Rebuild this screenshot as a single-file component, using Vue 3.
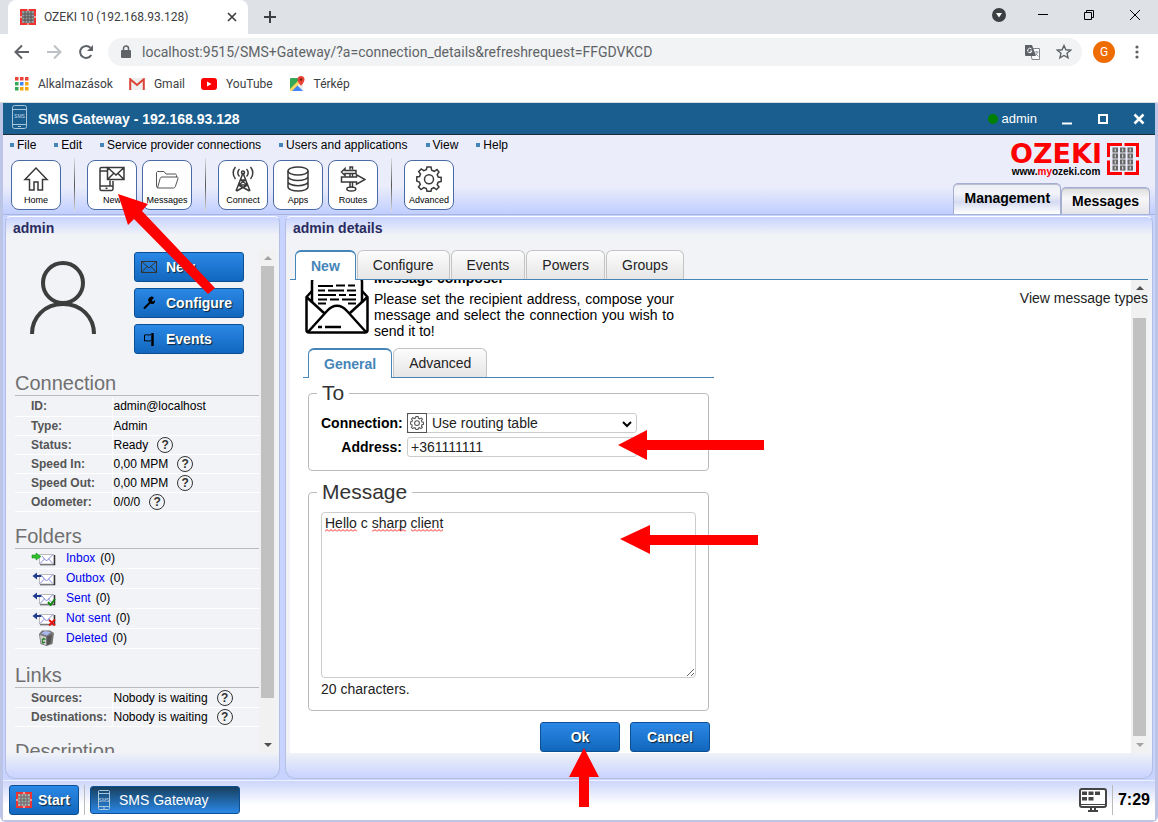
<script setup>
import { ref, computed } from 'vue'

const menu = ['File', 'Edit', 'Service provider connections', 'Users and applications', 'View', 'Help']

// toolbar groups, a separator is drawn between them
const toolbar = [
  ['Home'],
  ['New', 'Messages'],
  ['Connect', 'Apps', 'Routes'],
  ['Advanced']
]

const connection = [
  { name: 'ID:', value: 'admin@localhost' },
  { name: 'Type:', value: 'Admin' },
  { name: 'Status:', value: 'Ready', help: true },
  { name: 'Speed In:', value: '0,00 MPM', help: true },
  { name: 'Speed Out:', value: '0,00 MPM', help: true },
  { name: 'Odometer:', value: '0/0/0', help: true }
]

const folders = [
  { name: 'Inbox', count: 0 },
  { name: 'Outbox', count: 0 },
  { name: 'Sent', count: 0 },
  { name: 'Not sent', count: 0 },
  { name: 'Deleted', count: 0 }
]

const links = [
  { name: 'Sources:', value: 'Nobody is waiting', help: true },
  { name: 'Destinations:', value: 'Nobody is waiting', help: true }
]

const tabs = ['New', 'Configure', 'Events', 'Powers', 'Groups']
const activeTab = ref('New')
const formTabs = ['General', 'Advanced']
const activeFormTab = ref('General')

const url = ref('localhost:9515/SMS+Gateway/?a=connection_details&refreshrequest=FFGDVKCD')
const route = ref('Use routing table')
const address = ref('+361111111')
const message = ref('Hello c sharp client')
const count = computed(() => message.value.length)
</script>

<template>
  <div class="browser">
    <!-- browser chrome -->
    <div class="tabstrip">
      <div class="browser-tab">
        <svg class="favicon" width="16" height="16" viewBox="0 0 16 16">
          <rect width="16" height="16" fill="#e33" />
          <rect x="2" y="2" width="12" height="12" fill="#999" />
          <path d="M5 2v12M8 2v12M11 2v12M2 5h12M2 8h12M2 11h12" stroke="#555" />
          <path d="M8 0v2M8 14v2M0 8h2M14 8h2" stroke="#fff" />
        </svg>
        <span class="browser-tab-title">OZEKI 10 (192.168.93.128)</span>
        <button class="plain" aria-label="Close tab">
          <svg width="10" height="10" viewBox="0 0 10 10"><path d="M1 1l8 8M9 1l-8 8" stroke="#3c4043" stroke-width="1.7" /></svg>
        </button>
      </div>
      <button class="plain new-tab" aria-label="New tab">
        <svg width="12" height="12" viewBox="0 0 12 12"><path d="M6 0v12M0 6h12" stroke="#3c4043" stroke-width="2" /></svg>
      </button>
      <div class="window-buttons">
        <svg width="14" height="14" viewBox="0 0 14 14"><circle cx="7" cy="7" r="7" fill="#3c4043" /><path d="M4 5h6l-3 4.500z" fill="#fff" /></svg>
        <button class="plain" aria-label="Minimize"><svg width="10" height="10" viewBox="0 0 10 10"><path d="M0 4.500h10" stroke="#000" /></svg></button>
        <button class="plain" aria-label="Restore"><svg width="10" height="10" viewBox="0 0 10 10"><path d="M.5 2.500h7v7h-7zM2.500 2.500v-2h7v7h-2" fill="none" stroke="#000" /></svg></button>
        <button class="plain" aria-label="Close"><svg width="10" height="10" viewBox="0 0 10 10"><path d="M0 0l10 10M10 0L0 10" stroke="#000" /></svg></button>
      </div>
    </div>

    <div class="navbar">
      <button class="plain" aria-label="Back"><svg width="16" height="16" viewBox="0 0 16 16"><path d="M15 8H2M8 1.500L1.500 8 8 14.500" fill="none" stroke="#5f6368" stroke-width="2" /></svg></button>
      <button class="plain" aria-label="Forward"><svg width="16" height="16" viewBox="0 0 16 16"><path d="M1 8h13M8 1.500L14.500 8 8 14.500" fill="none" stroke="#bdc1c6" stroke-width="2" /></svg></button>
      <button class="plain" aria-label="Reload"><svg width="16" height="16" viewBox="0 0 16 16"><path d="M13.300 11A6 6 0 1 1 12.500 3.800" fill="none" stroke="#5f6368" stroke-width="2" /><path d="M15 1v6H9z" fill="#5f6368" /></svg></button>
      <div class="omnibox">
        <svg width="10" height="14" viewBox="0 0 10 14"><rect y="5" width="10" height="8" rx="1" fill="#5f6368" /><path d="M2.500 5V3.500a2.500 2.500 0 0 1 5 0V5" fill="none" stroke="#5f6368" stroke-width="1.500" /></svg>
        <input v-model="url" class="url" aria-label="Address and search bar">
        <svg width="15" height="15" viewBox="0 0 15 15">
          <path d="M5 3.500h9.500v11H7z" fill="#fff" stroke="#80868b" />
          <path d="M0 0h7l4 11H1a1 1 0 0 1-1-1z" fill="#5f6368" />
          <path d="M6.500 4A2.200 2.200 0 1 0 7 6H5" fill="none" stroke="#fff" />
          <path d="M9.500 7h4M11.500 6v1M13 7l-3 4M10.500 8.500l3 3" fill="none" stroke="#80868b" stroke-width=".8" />
        </svg>
        <svg width="16" height="16" viewBox="0 0 16 16"><path d="M8 1.500l1.900 4.300 4.700.4-3.600 3.100 1.100 4.600L8 11.500l-4.100 2.400L5 9.300 1.400 6.200l4.700-.4z" fill="none" stroke="#5f6368" stroke-width="1.400" /></svg>
      </div>
      <div class="avatar">G</div>
      <button class="plain more" aria-label="Menu"><svg width="4" height="14" viewBox="0 0 4 14" fill="#5f6368"><circle cx="2" cy="2" r="1.600" /><circle cx="2" cy="7" r="1.600" /><circle cx="2" cy="12" r="1.600" /></svg></button>
    </div>

    <div class="bookmarks">
      <a href="#">
        <svg width="14" height="14" viewBox="0 0 14 14">
          <path d="M0 0h3.500v3.500H0zM5 0h3.500v3.500H5zM10 0h3.500v3.500H10z" fill="#ea4335" />
          <path d="M0 5h3.500v3.500H0zM0 10h3.500v3.500H0z" fill="#34a853" />
          <path d="M5 5h3.500v3.500H5z" fill="#4285f4" />
          <path d="M10 5h3.500v3.500H10zM5 10h3.500v3.500H5zM10 10h3.500v3.500H10z" fill="#f4a70a" />
        </svg>Alkalmazások</a>
      <a href="#">
        <svg width="16" height="12" viewBox="0 0 16 12"><path d="M1 0h14v12H1z" fill="#eee" /><path d="M1.200 12V1.200L8 7l6.800-5.800V12" fill="none" stroke="#db4437" stroke-width="2" /></svg>Gmail</a>
      <a href="#">
        <svg width="16" height="12" viewBox="0 0 16 12"><rect width="16" height="12" rx="3" fill="#f00" /><path d="M6 3.500v5L10.500 6z" fill="#fff" /></svg>YouTube</a>
      <a href="#">
        <svg width="16" height="16" viewBox="0 0 16 16">
          <rect x="1" y="2" width="13" height="13" rx="1" fill="#34a853" />
          <path d="M1 14L13 3l1 1v11z" fill="#eee" />
          <path d="M2 15l6-6 6 6z" fill="#4285f4" />
          <path d="M1 13L12 2h2v2L3 15H1z" fill="#fdd663" />
          <path d="M12 0a3.500 3.500 0 0 1 3.500 3.500C15.500 6 12 10 12 10S8.500 6 8.500 3.500A3.500 3.500 0 0 1 12 0z" fill="#ea4335" />
          <circle cx="12" cy="3.500" r="1.200" fill="#801e16" />
        </svg>Térkép</a>
    </div>

    <!-- SMS gateway window -->
    <div class="desktop">
      <div class="titlebar">
        <svg width="16" height="24" viewBox="0 0 16 24">
          <rect x=".5" y=".5" width="14" height="23" rx="2" fill="none" stroke="#a9c6da" />
          <path d="M1 4.500h13M1 19.500h13M6 21.500h3" stroke="#a9c6da" />
          <text x="7.500" y="13" class="phone-text">SMS</text>
        </svg>
        <h1>SMS Gateway - 192.168.93.128</h1>
        <span class="dot"></span>
        <span class="user">admin</span>
        <button class="plain" aria-label="Minimize window"><svg width="12" height="12" viewBox="0 0 12 12"><path d="M1 10.500h10" stroke="#fff" stroke-width="2" /></svg></button>
        <button class="plain" aria-label="Maximize window"><svg width="12" height="12" viewBox="0 0 12 12"><path d="M2 2h8v8H2z" fill="none" stroke="#fff" stroke-width="2" /></svg></button>
        <button class="plain" aria-label="Close window"><svg width="12" height="12" viewBox="0 0 12 12"><path d="M1.500 1.500l9 9M10.500 1.500l-9 9" stroke="#fff" stroke-width="2.500" /></svg></button>
      </div>

      <header class="header">
        <div class="header-left">
          <nav class="menu">
            <a v-for="item in menu" :key="item" href="#">{{ item }}</a>
          </nav>
          <div class="toolbar">
            <div v-for="(group, i) in toolbar" :key="i" class="tool-group">
              <button v-for="tool in group" :key="tool" class="tool">
                <svg width="26" height="26" viewBox="0 0 26 26" fill="none" stroke="#3a3a3a" stroke-width="1.500">
                  <path v-if="tool === 'Home'" d="M13 2L2 13.500h4.500V24h4.500v-8h4v8h4.500V13.500H24z" />
                  <g v-else-if="tool === 'New'">
                    <path d="M9 1.500H2.500a1.500 1.500 0 0 0-1.500 1.500v20a1.500 1.500 0 0 0 1.500 1.500h10a1.500 1.500 0 0 0 1.500-1.500v-8M1 20h13M1 5h7M6.500 22.300h2M11 14.500v5" />
                    <path d="M8.500 1.500H25v12H8.500zM8.500 1.500L17 9l8-7.500M8.500 13.500l6-6M25 13.500l-6-6" />
                  </g>
                  <g v-else-if="tool === 'Messages'" stroke-width="1" stroke="#555">
                    <path d="M3.500 22L2.500 20V7c0-1 .5-1.500 1.500-1.500h6l2 2.500h9c1 0 1.500.5 1.500 1.500V11M3.500 22h16c1 0 1.500-.5 1.800-1.300L24 12.500c.3-1-.2-1.500-1-1.500H8c-1 0-1.500.5-1.800 1.300z" />
                  </g>
                  <g v-else-if="tool === 'Connect'">
                    <path d="M13 7L6 25M13 7l7 18M10.500 14h5M8.500 19h9M10.500 14l7 5M15.500 14l-7 5M8.500 19l11 6M17.500 19l-11 6" />
                    <circle cx="13" cy="6.500" r="1.500" />
                    <path d="M9.500 3a5 5 0 0 0 0 7.500M16.500 3a5 5 0 0 1 0 7.500M5.500 1a9 9 0 0 0 0 12M20.500 1a9 9 0 0 1 0 12" />
                  </g>
                  <g v-else-if="tool === 'Apps'">
                    <ellipse cx="13" cy="5" rx="10" ry="4" />
                    <path d="M3 5v16c0 2.200 4.500 4 10 4s10-1.800 10-4V5M3 10.500c0 2.200 4.500 4 10 4s10-1.800 10-4M3 15.700c0 2.200 4.500 4 10 4s10-1.800 10-4" />
                  </g>
                  <g v-else-if="tool === 'Routes'">
                    <path d="M10 3.500V1h2.500v2.500M16 4.500H5V2.500L1.500 6 5 9.500v-2h11zM1.500 11h15V8.800L25 13.500l-8.500 4.700V16h-15zM10 7.500V11M12.500 7.500V11M10 16v6M12.500 16v6" />
                    <ellipse cx="11.300" cy="23" rx="4.500" ry="2" />
                  </g>
                  <g v-else>
                    <path d="M11 1h4l.7 3.300 2.500 1L21 3.500 23 6l-1.800 2.500 1 2.500 3 .5v4l-3 .7-1 2.500L23 21l-2.500 2.500-2.700-1.800-2.300 1L15 25.300h-4l-.7-2.700-2.500-1L5 23.500 2.500 21l1.800-2.500-1-2.500L.7 15v-4l2.800-.5 1-2.500L2.700 5.500 5.200 3l2.500 1.700 2.600-1z" />
                    <circle cx="13" cy="13.200" r="4.500" />
                  </g>
                </svg>
                <span>{{ tool }}</span>
              </button>
            </div>
          </div>
        </div>
        <div class="header-right">
          <div class="logo">
            <div>
              <div class="logo-name">OZEKI</div>
              <div class="logo-url">www.<span>my</span>ozeki.com</div>
            </div>
            <svg width="32" height="32" viewBox="0 0 32 32">
              <path d="M1.500 14V1.500H15M17.500 1.500h13V14M30.500 17.500v13h-13M15 30.500H1.500v-13" fill="none" stroke="#f00" stroke-width="3" />
              <path v-for="y in [4, 10, 16, 22]" :key="y" :d="`M5.500 ${y + 3}h5.500M13 ${y + 3}h5.500M20.500 ${y + 3}h5.500`" stroke="#666" stroke-width="5" />
              <path v-for="y in [4, 10, 16, 22]" :key="-y" :d="`M7.700 ${y + 3}h1M15.200 ${y + 3}h1M22.700 ${y + 3}h1`" stroke="#eee" stroke-width="3" />
            </svg>
          </div>
          <div class="view-tabs">
            <button class="active">Management</button>
            <button>Messages</button>
          </div>
        </div>
      </header>

      <main class="panels">
        <section class="panel side">
          <h2>admin</h2>
          <div class="scroll-row">
            <div class="side-content">
              <div class="profile">
                <svg width="66" height="74" viewBox="0 0 66 74" fill="none" stroke="#3d3d3d" stroke-width="4"><circle cx="33" cy="22" r="20" /><path d="M2 73c0-17 13-30 31-30s31 13 31 30" /></svg>
                <div class="profile-buttons">
                  <button class="blue">
                    <svg width="16" height="16" viewBox="0 0 16 16" fill="none" stroke="#333"><path d="M.5 2.500h15v11H.5zM.5 2.500L8 9l7.500-6.500M.5 13.500L6 7.500M15.500 13.500L10 7.500" /></svg>New
                  </button>
                  <button class="blue">
                    <svg width="16" height="16" viewBox="0 0 16 16"><path d="M3 13.500l7-7" stroke="#000" stroke-width="2" /><path d="M13 3l-2 2 .3 1.200h1.400L14 5a3 3 0 0 1-4.500 3.500L8 7a3 3 0 0 1 5-4z" fill="#000" /></svg>Configure
                  </button>
                  <button class="blue">
                    <svg width="16" height="16" viewBox="0 0 16 16"><path d="M11.500 2v13" stroke="#000" stroke-width="2.500" /><path d="M10 3.500c-2 1.500-4-.5-6.500.5v6c2-1 4.500 1 6.500-.5" fill="none" stroke="#000" /></svg>Events
                  </button>
                </div>
              </div>

              <h3>Connection</h3>
              <table class="props">
                <tbody>
                  <tr v-for="row in connection" :key="row.name">
                    <th scope="row">{{ row.name }}</th>
                    <td><div class="cell">{{ row.value }}<button v-if="row.help" class="help">?</button></div></td>
                  </tr>
                </tbody>
              </table>

              <h3>Folders</h3>
              <ul class="folders">
                <li v-for="folder in folders" :key="folder.name">
                  <svg width="26" height="16" viewBox="0 0 26 16">
                    <g v-if="folder.name === 'Deleted'">
                      <path d="M8 4l3-3.500h8L23 3l-1.500 11-6 2-6-2z" fill="#777" />
                      <path d="M9 5l6 2 .5 8.500L10 13z" fill="#ccc" />
                      <path d="M10 3.500l4-2.500 6 1-4 3.500z" fill="#aab6ee" />
                      <path d="M16 6.500l5-2-1.500 9-4 2" fill="#555" />
                      <path d="M11 10.500l1.500-2 2 1M11 11l1 2 2-1" fill="none" stroke="#137a13" stroke-width="1.300" />
                    </g>
                    <g v-else>
                      <path d="M9 14.500h14.500V5" fill="none" stroke="#333" stroke-width="1.500" />
                      <path d="M8.500 4.500h14v9.500h-14z" fill="#fff" stroke="#bbb" />
                      <path d="M9 13.500l4.500-4.500L11 6M22 13.500L17.500 9 22 4.500M13 8.500l2.500 2.500L18 8.500" fill="none" stroke="#8288d8" />
                      <path v-if="folder.name === 'Inbox'" d="M1 5h4V3l5 3.500-5 3.500V8H1z" fill="#2dc02d" stroke="#1b8f1b" stroke-width=".6" />
                      <path v-else d="M10.500 5H6V2.500L1.500 6 6 9.500V7h4.500z" fill="#1d3a8f" />
                      <path v-if="folder.name === 'Sent'" d="M17 12l2.500 3 4.500-6" fill="none" stroke="#128a12" stroke-width="2" />
                      <path v-if="folder.name === 'Not sent'" d="M18 10l6 5.500M24 9.500l-6 6" stroke="#e81414" stroke-width="2" />
                    </g>
                  </svg>
                  <a href="#">{{ folder.name }}</a><span>({{ folder.count }})</span>
                </li>
              </ul>

              <h3>Links</h3>
              <table class="props">
                <tbody>
                  <tr v-for="row in links" :key="row.name">
                    <th scope="row">{{ row.name }}</th>
                    <td><div class="cell">{{ row.value }}<button v-if="row.help" class="help">?</button></div></td>
                  </tr>
                </tbody>
              </table>

              <h3>Description</h3>
            </div>
            <div class="scrollbar">
              <i class="up light"></i>
              <div class="thumb side-thumb"></div>
              <i class="down"></i>
            </div>
          </div>
        </section>

        <section class="panel details">
          <h2>admin details</h2>
          <div class="tabs">
            <button v-for="tab in tabs" :key="tab" :class="{ active: tab === activeTab }" @click="activeTab = tab">{{ tab }}</button>
          </div>
          <div class="scroll-row">
            <div class="details-content">
              <div class="intro">
                <svg width="64" height="64" viewBox="0 0 64 64" fill="none" stroke="#000" stroke-width="2.500" stroke-linejoin="round">
                  <path d="M7 33V12c0-2 1-4 3-4h44c2 0 3 2 3 4v21" />
                  <path d="M7 21L1.500 27v33c0 2 1 2.500 2.500 2.500h56c1.500 0 2.500-.5 2.500-2.500V27L57 21" />
                  <path d="M1.500 27L19 43M62.500 27L45 43M3 62l19-21c6-7 14-7 20 0l19 21" />
                  <path d="M13 16h15M31 15.500h9M43 15.500h7M13 20.500h7M23 20.500h16M42 20.500h9M13 25h18M34 25h7M44 25h7M13 29.500h9M25 29.500h9M37 29.500h14M13 33.500h8M43 33.500h8" stroke-width="2" />
                  <path d="M13 57h4M20 57h16" />
                </svg>
                <div class="intro-text">
                  <strong>Message composer</strong>
                  <p>Please set the recipient address, compose your message and select the connection you wish to send it to!</p>
                </div>
              </div>

              <form class="form" @submit.prevent>
                <div class="tabs form-tabs">
                  <button v-for="tab in formTabs" :key="tab" type="button" :class="{ active: tab === activeFormTab }" @click="activeFormTab = tab">{{ tab }}</button>
                </div>
                <fieldset class="to">
                  <legend>To</legend>
                  <div class="field">
                    <label for="connection">Connection:</label>
                    <div class="select-box">
                      <span class="gear">
                        <svg width="14" height="14" viewBox="0 0 26 26" fill="none" stroke="#555" stroke-width="2">
                          <path d="M11 1h4l.7 3.300 2.500 1L21 3.500 23 6l-1.800 2.500 1 2.500 3 .5v4l-3 .7-1 2.500L23 21l-2.500 2.500-2.700-1.800-2.300 1L15 25.300h-4l-.7-2.700-2.500-1L5 23.500 2.500 21l1.800-2.500-1-2.500L.7 15v-4l2.800-.5 1-2.500L2.700 5.500 5.200 3l2.500 1.700 2.600-1z" />
                          <circle cx="13" cy="13.200" r="4.500" />
                        </svg>
                      </span>
                      <select id="connection" v-model="route">
                        <option>Use routing table</option>
                      </select>
                      <svg class="chevron" width="10" height="8" viewBox="0 0 10 8"><path d="M1 2l4 4 4-4" fill="none" stroke="#000" stroke-width="2" /></svg>
                    </div>
                  </div>
                  <div class="field">
                    <label for="address">Address:</label>
                    <input id="address" v-model="address" type="text">
                  </div>
                </fieldset>
                <fieldset class="message">
                  <legend>Message</legend>
                  <div class="text-wrap">
                    <textarea v-model="message" aria-label="Message" spellcheck="false"></textarea>
                    <!-- spelling marks under Hello, sharp and client -->
                    <svg class="squiggle" width="120" height="3" viewBox="0 0 120 3">
                      <defs>
                        <pattern id="wave" width="4" height="3" patternUnits="userSpaceOnUse"><path d="M0 2.500L2 .5l2 2" fill="none" stroke="#f22" /></pattern>
                      </defs>
                      <path d="M0 0h32v3H0zM47 0h34v3H47zM86 0h32v3H86z" fill="url(#wave)" />
                    </svg>
                  </div>
                  <div class="count">{{ count }} characters.</div>
                </fieldset>
                <div class="actions">
                  <button class="blue">Ok</button>
                  <button class="blue" type="button">Cancel</button>
                </div>
              </form>
            </div>
            <div class="scrollbar">
              <i class="up"></i>
              <div class="thumb details-thumb"></div>
              <i class="down light"></i>
            </div>
            <a href="#" class="types">View message types</a>
          </div>
        </section>
      </main>

      <footer class="taskbar">
        <button class="blue start">
          <svg width="16" height="16" viewBox="0 0 16 16">
            <rect width="16" height="16" fill="#e33" />
            <rect x="2" y="2" width="12" height="12" fill="#aaa" />
            <path d="M5 2v12M8 2v12M11 2v12M2 5h12M2 8h12M2 11h12" stroke="#666" />
            <path d="M8 0v2M8 14v2M0 8h2M14 8h2" stroke="#fff" />
          </svg>Start
        </button>
        <span class="divider"></span>
        <button class="task">
          <svg width="14" height="20" viewBox="0 0 14 20">
            <rect x="1.500" y=".5" width="11" height="19" rx="1" fill="none" stroke="#a9c6da" />
            <path d="M2 3.500h10M2 16.500h10M6 18h2" stroke="#a9c6da" />
            <text x="7" y="12" class="phone-text">SMS</text>
          </svg>SMS Gateway
        </button>
        <svg class="monitor" width="28" height="24" viewBox="0 0 28 24">
          <rect x="1" y="1" width="26" height="18" rx="2" fill="#fff" stroke="#444" stroke-width="2" />
          <path d="M1 16.500h26" stroke="#444" />
          <path d="M3 3.500h5v3.500H3zM9.500 3.500h5v3.500h-5zM16 3.500h5v3.500h-5zM3 9h5v3.500H3zM9.500 9h5v3.500h-5z" fill="#444" />
          <path d="M12 19v3M16 19v3M9 23h10" stroke="#444" stroke-width="2" />
        </svg>
        <span class="divider"></span>
        <span class="clock">7:29</span>
      </footer>
    </div>

    <!-- tutorial arrows laid over the page -->
    <svg class="arrows" width="780" height="822" viewBox="0 0 780 822" fill="#f00">
      <path d="M118 194l30 10-6 7 73 77-7 6-74-75-6 6z" />
      <path d="M618 445l29-15v10h117v10H647v10z" />
      <path d="M620 539l30-14v10h108v10H650v9z" />
      <path d="M584 748l15 29h-10v30h-10v-30h-10z" />
    </svg>
  </div>
</template>

<style>
body {
  margin: 0;
  background: #fff;
}
</style>

<style scoped>
* {
  box-sizing: border-box;
}
.browser {
  position: relative;
  display: flex;
  flex-direction: column;
  height: 100vh;
  min-height: 700px;
  overflow: hidden;
  font-family: "Liberation Sans", Arial, sans-serif;
  font-size: 14px;
  color: #000;
}
button, input, select, textarea {
  font-family: inherit;
  font-size: 14px;
}
a {
  color: inherit;
  text-decoration: none;
}
svg {
  display: block;
  flex: none;
}
.plain {
  padding: 0;
  border: none;
  background: none;
}

/* browser chrome */
.tabstrip {
  display: flex;
  align-items: center;
  height: 34px;
  flex: none;
  background: #dee1e6;
  padding-left: 8px;
}
.browser-tab {
  display: flex;
  align-items: center;
  width: 240px;
  height: 34px;
  padding: 0 11px 0 12px;
  background: #fff;
  border-radius: 8px 8px 0 0;
}
.browser-tab-title {
  flex: 1;
  margin-left: 8px;
  font: 12px Roboto, sans-serif;
  color: #3c4043;
  white-space: nowrap;
}
.new-tab {
  margin-left: 16px;
}
.window-buttons {
  display: flex;
  align-items: center;
  gap: 36px;
  margin-left: auto;
  margin-right: 18px;
  padding-bottom: 4px;
}
.window-buttons > svg {
  margin-right: -4px;
}
.navbar {
  display: flex;
  align-items: center;
  gap: 16px;
  height: 36px;
  flex: none;
  padding: 0 19px 0 14px;
}
.omnibox {
  flex: 1;
  display: flex;
  align-items: center;
  gap: 16px;
  height: 28px;
  margin: 0 -5px 0 -2px;
  padding: 0 10px 0 13px;
  border-radius: 14px;
  background: #f1f3f4;
}
.url {
  flex: 1;
  min-width: 0;
  margin-left: -5px;
  padding: 0;
  border: none;
  background: none;
  font: 14px Roboto, sans-serif;
  color: #5f6368;
}
.avatar {
  width: 22px;
  height: 22px;
  border-radius: 50%;
  background: #ef6c00;
  color: #fff;
  font: 12px/22px Roboto, sans-serif;
  text-align: center;
}
.more {
  margin-left: 4px;
}
.bookmarks {
  display: flex;
  align-items: center;
  gap: 16px;
  height: 33px;
  flex: none;
  padding: 0 15px 4px;
  border-bottom: 1px solid #dadce0;
}
.bookmarks a {
  display: flex;
  align-items: center;
  gap: 9px;
  font: 12px Roboto, sans-serif;
  color: #3c4043;
}

/* gateway window */
.desktop {
  flex: 1;
  display: flex;
  flex-direction: column;
  min-height: 0;
  border: solid #bcc5e6;
  border-width: 0 3px 2px 3px;
  border-radius: 0 0 6px 6px;
  background: #c8d3ff;
}
.titlebar {
  display: flex;
  align-items: center;
  height: 32px;
  flex: none;
  padding: 0 10px 0 9px;
  background: #195e8e;
  border-bottom: 1px solid #1c2b36;
  color: #fff;
}
.titlebar > svg {
  margin-bottom: 3px;
}
.titlebar h1 {
  flex: 1;
  margin: 0 0 0 10px;
  font-size: 14px;
}
.titlebar button {
  margin-left: 24px;
}
.phone-text {
  font-family: "Liberation Sans", sans-serif;
  font-size: 5px;
  fill: #c7dbe8;
  text-anchor: middle;
}
.dot {
  width: 10px;
  height: 10px;
  margin-right: 4px;
  border-radius: 50%;
  background: #008000;
}
.user {
  font-size: 13px;
}
.header {
  display: flex;
  justify-content: space-between;
  flex: none;
  height: 80px;
  background: linear-gradient(#ebedfb 65%, #c0ceff);
  border-bottom: 1px solid #a9b4da;
}
.menu {
  display: flex;
  gap: 18px;
  height: 20px;
  padding-left: 7px;
  line-height: 20px;
  font-size: 12px;
}
.menu a::before {
  content: "";
  display: inline-block;
  width: 4px;
  height: 4px;
  margin-right: 3px;
  vertical-align: 2px;
  background: #4585b8;
}
.toolbar {
  display: flex;
  padding: 5px 8px 0;
}
.tool-group {
  display: flex;
  gap: 5px;
}
.tool-group + .tool-group::before {
  content: "";
  width: 1px;
  height: 54px;
  margin: -2px 7px 0 13px;
  background: linear-gradient(#ddd, #555, #ddd);
}
.tool {
  display: flex;
  flex-direction: column;
  align-items: center;
  justify-content: space-between;
  width: 50px;
  height: 50px;
  padding: 5px 0 3px;
  border: 1px solid #4a6aa5;
  border-radius: 8px;
  background: #fff;
  color: #000;
}
.tool span {
  font-size: 9px;
  line-height: 11px;
}
.header-right {
  display: flex;
  flex-direction: column;
  justify-content: space-between;
  align-items: flex-end;
  padding: 8px 5px 0 0;
}
.logo {
  display: flex;
  gap: 5px;
  margin-right: 11px;
}
.logo-name {
  font: bold 27px/22px "DejaVu Sans", sans-serif;
  color: #f00;
}
.logo-url {
  font-size: 10px;
  line-height: 14px;
  font-weight: bold;
  text-align: center;
}
.logo-url span {
  color: #f00;
}
.view-tabs {
  display: flex;
  align-items: flex-end;
}
.view-tabs button {
  height: 27px;
  padding: 0 10px;
  border: 1px solid #a5aed0;
  border-bottom: none;
  border-radius: 5px 5px 0 0;
  background: linear-gradient(#dcdcdc, #f7f7f9 40%, #e4e4ea);
  font-weight: bold;
  color: #000;
  box-shadow: inset 0 1px #b9bfd0;
}
.view-tabs .active {
  height: 31px;
  padding-bottom: 3px;
  background: linear-gradient(#ececf4, #f4f5fb 30%, #d5dbf2 60%, #fff);
}

/* panels */
.panels {
  flex: 1;
  display: flex;
  gap: 5px;
  min-height: 0;
  padding: 1px 2px 1px;
}
.panel {
  display: flex;
  flex-direction: column;
  min-height: 0;
  min-width: 0;
  padding-bottom: 25px;
  border: 1px solid #b4bfe2;
  border-top-color: #fff;
  border-radius: 6px 6px 10px 10px;
  background: linear-gradient(#c8d3ff, rgba(241, 243, 247, 0) 18px), linear-gradient(to top, #c8d3ff, #f1f3f7 26px);
}
.side {
  width: 275px;
  flex: none;
}
.details {
  flex: 1;
}
.panel h2 {
  margin: 0 0 10px 7px;
  font-size: 14px;
  line-height: 23px;
  color: #2a2a60;
}
.scroll-row {
  position: relative;
  flex: 1;
  display: flex;
  min-height: 0;
  overflow: hidden;
}
.side .scroll-row {
  margin-right: 3px;
}
.side-content {
  flex: 1;
  padding-left: 9px;
  overflow: hidden;
}
.profile {
  display: flex;
  justify-content: space-between;
  padding: 2px 15px 0 15px;
}
.profile > svg {
  margin-top: 9px;
}
.profile-buttons {
  display: flex;
  flex-direction: column;
  gap: 6px;
}
.blue {
  height: 30px;
  border: 1px solid #0d4f93;
  border-radius: 3px;
  background: linear-gradient(#2b88e6, #1267bd);
  color: #fff;
  font-weight: bold;
  text-shadow: 1px 1px 1px #123;
}
.profile-buttons .blue {
  display: flex;
  align-items: center;
  gap: 9px;
  width: 110px;
  padding: 0 6px;
}
h3 {
  margin: 18px 0 0;
  font-size: 20px;
  font-weight: normal;
  line-height: 23px;
  color: #707070;
  border-bottom: 1px solid #bbb;
}
.props + h3 {
  margin-top: 13px;
}
.folders + h3 {
  margin-top: 15px;
}
.props {
  width: 100%;
  margin-top: 1px;
  border-collapse: collapse;
  font-size: 12px;
}
.props th, .props td {
  height: 19px;
  padding: 0;
  border-bottom: 1px solid #fff;
  text-align: left;
}
.props th {
  width: 97px;
  padding-left: 16px;
  border-right: 1px solid #fff;
  color: #555;
}
.cell {
  display: flex;
  align-items: center;
  gap: 9px;
  height: 18px;
  padding-left: 1px;
}
.help {
  width: 16px;
  height: 16px;
  padding: 0;
  border: 1px solid #333;
  border-radius: 50%;
  background: none;
  font-size: 12px;
  font-weight: bold;
  line-height: 14px;
  color: #333;
}
.folders {
  margin: 0;
  padding: 0;
  list-style: none;
  font-size: 12px;
}
.folders li {
  display: flex;
  align-items: center;
  gap: 5px;
  height: 20px;
  padding-left: 16px;
  border-bottom: 1px solid #fff;
}
.folders a {
  margin-left: 4px;
  color: #00e;
}
.scrollbar {
  display: flex;
  flex-direction: column;
  align-items: center;
  justify-content: space-between;
  width: 17px;
  flex: none;
  padding: 6px 0;
  background: #f1f1f1;
}
.scrollbar i {
  border: 4px solid transparent;
}
.scrollbar .up {
  border-top: none;
  border-bottom-color: #505050;
}
.scrollbar .down {
  border-bottom: none;
  border-top-color: #505050;
}
.scrollbar .up.light {
  border-bottom-color: #a3a3a3;
}
.scrollbar .down.light {
  border-top-color: #a3a3a3;
}
.thumb {
  width: 13px;
  background: #c1c1c1;
}
.side-thumb {
  flex: 0 0 88%;
  margin: 6px 0 auto;
}
.details-thumb {
  flex: 1;
  margin: 28px 0 7px;
}

/* tabs */
.tabs {
  display: flex;
  align-items: flex-end;
  gap: 1px;
  flex: none;
  padding-left: 5px;
  border-bottom: 1px solid #4585b8;
}
.tabs button {
  height: 29px;
  padding: 0 15px;
  border: 1px solid #c4c4c4;
  border-bottom: none;
  border-radius: 6px 6px 0 0;
  background: linear-gradient(#fcfcfc, #e6e6e6);
  color: #222;
}
.tabs .active {
  height: 30px;
  margin-bottom: -1px;
  border-color: #4585b8;
  border-top-width: 2px;
  background: #fff;
  color: #4585b8;
  font-weight: bold;
}
.details > .tabs, .details .scroll-row {
  margin: 0 4px;
}
.details > .tabs {
  height: 31px;
}
.details h2 {
  margin-bottom: 9px;
}
.details-content {
  flex: 1;
  overflow: hidden;
  background: #fff;
}
.intro {
  display: flex;
  gap: 5px;
  margin-top: -10px;
  padding-left: 15px;
}
.intro-text {
  width: 300px;
  line-height: 16px;
  text-align: justify;
}
.intro-text p {
  margin: 5px 0 0;
}
.form {
  width: 411px;
  margin: 9px 0 0 13px;
}
.form fieldset {
  margin: 0 5px;
  padding: 0 12px;
  border: 1px solid #bbb;
  border-radius: 4px;
}
.form-tabs {
  margin-bottom: 3px;
}
legend {
  margin-left: -4px;
  padding: 0 5px;
  font-size: 21px;
  line-height: 24px;
  color: #333;
}
.to {
  height: 90px;
}
.form .to {
  padding-top: 8px;
}
.field {
  display: flex;
  align-items: center;
  gap: 5px;
  height: 20px;
  margin-bottom: 4px;
}
.field label {
  width: 81px;
  text-align: right;
  font-weight: bold;
}
.field input, .select-box {
  width: 230px;
  height: 20px;
  border: 1px solid #ccc;
  border-radius: 3px;
}
.field input {
  padding: 0 3px;
  color: #222;
}
.select-box {
  position: relative;
  display: flex;
}
.gear {
  width: 20px;
  height: 20px;
  margin: -1px 0 0 -1px;
  padding: 2px;
  border: 1px solid #555;
  flex: none;
}
.select-box select {
  flex: 1;
  padding: 0 5px;
  border: none;
  background: none;
  appearance: none;
  color: #222;
}
.chevron {
  position: absolute;
  right: 4px;
  top: 6px;
  pointer-events: none;
}
.form .message {
  margin-top: 9px;
  height: 231px;
  padding-top: 8px;
}
.text-wrap {
  position: relative;
}
textarea {
  display: block;
  width: 375px;
  height: 166px;
  padding: 2px 3px;
  border: 1px solid #ccc;
  border-radius: 4px;
  line-height: 16px;
  color: #222;
}
.squiggle {
  position: absolute;
  left: 4px;
  top: 17px;
}
.count {
  line-height: 22px;
  color: #222;
}
.actions {
  display: flex;
  justify-content: flex-end;
  gap: 10px;
  padding: 11px 4px 0 0;
}
.actions .blue {
  width: 80px;
}
.types {
  position: absolute;
  right: 0;
  top: 10px;
  line-height: 16px;
  color: #222;
}

/* taskbar */
.taskbar {
  display: flex;
  align-items: center;
  flex: none;
  height: 40px;
  padding: 0 5px 2px 6px;
  border-top: 1px solid #eef1ff;
  background: linear-gradient(#ccd6fa, #fff 24px);
}
.divider {
  width: 1px;
  height: 30px;
  margin: 0 5px;
  background: #bbb;
}
.start {
  display: flex;
  align-items: center;
  gap: 6px;
  width: 70px;
  padding: 0 6px;
}
.task {
  display: flex;
  align-items: center;
  gap: 8px;
  width: 150px;
  height: 28px;
  padding: 0 6px;
  border: 1px solid #0d4f93;
  border-radius: 3px;
  background: linear-gradient(#17405f, #2b88e6);
  color: #fff;
}
.monitor {
  margin-left: auto;
}
.clock {
  font-size: 16px;
  font-weight: bold;
}
.arrows {
  position: absolute;
  left: 0;
  top: 0;
  pointer-events: none;
}
</style>
